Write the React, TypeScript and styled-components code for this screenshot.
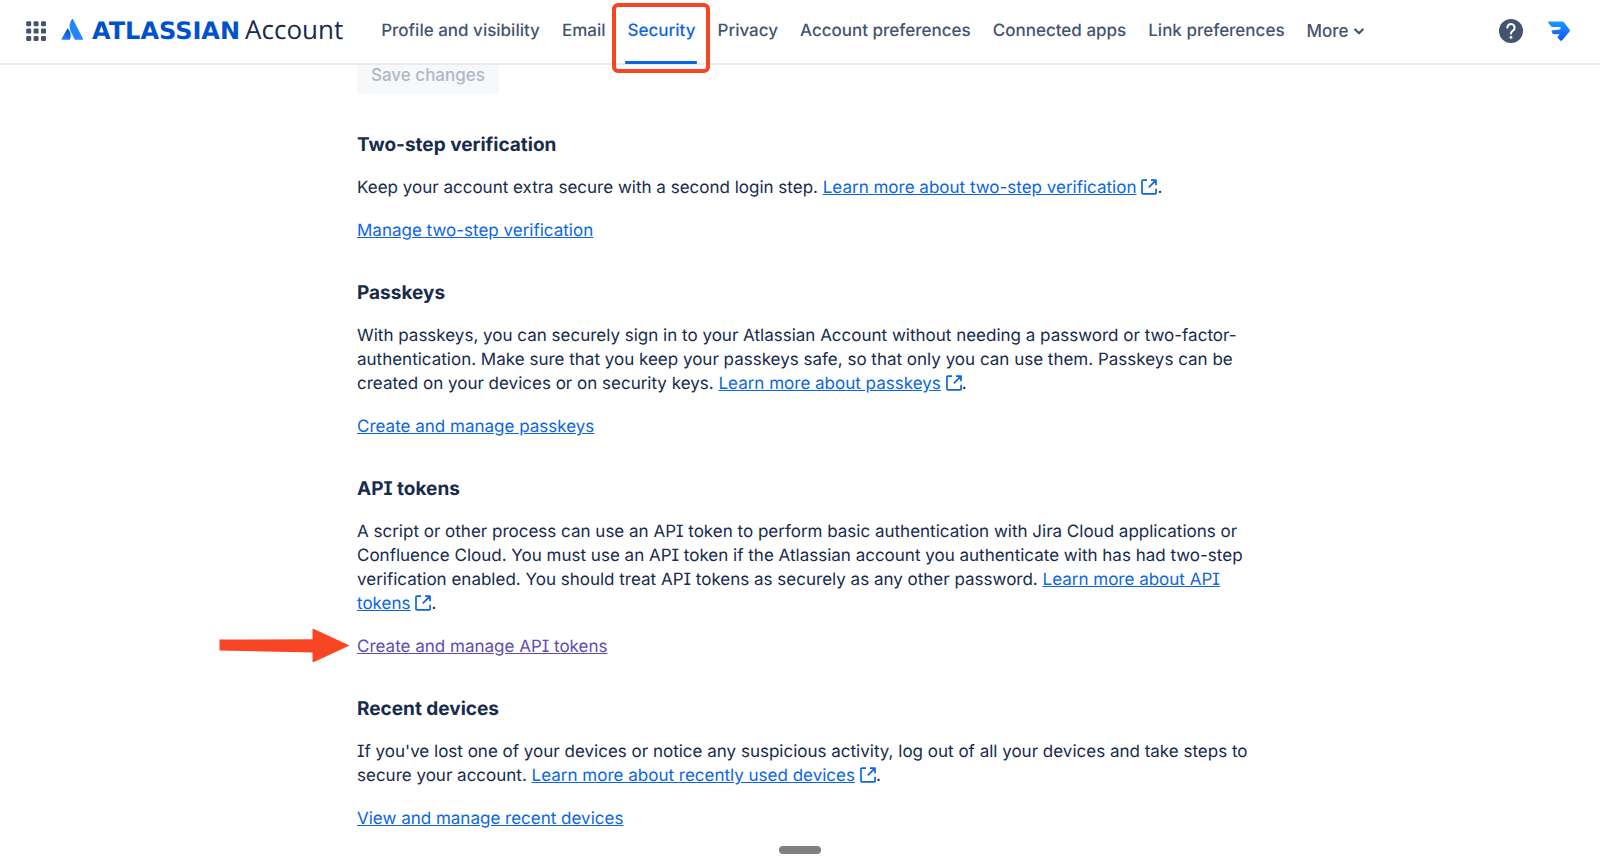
import React from "react";
import styled, { createGlobalStyle, css } from "styled-components";

const GlobalStyle = createGlobalStyle`
  * { box-sizing: border-box; }
  body {
    margin: 0;
    background: #ffffff;
    color: #172b4d;
    font-family: Inter, "Liberation Sans", sans-serif;
    font-size: 17px;
    line-height: 24px;
    font-feature-settings: "cv08";
    text-rendering: geometricPrecision;
  }
`;

const Header = styled.header`
  position: fixed;
  top: 0;
  left: 0;
  right: 0;
  z-index: 2;
  display: flex;
  align-items: center;
  height: 65px;
  padding: 0 24px 2px;
  background: #ffffff;
  border-bottom: 2px solid #e8eaee;
`;

const IconButton = styled.button`
  display: flex;
  padding: 0;
  border: 0;
  background: none;
  cursor: pointer;
`;

const Brand = styled.a`
  display: flex;
  align-items: center;
  gap: 8px;
  margin: 0 38px 0 12px;
  color: #172b4d;
  text-decoration: none;
`;

const BrandText = styled.span`
  display: flex;
  align-items: baseline;
  gap: 5px;
  padding-bottom: 2px;
`;

const Wordmark = styled.span`
  font: 700 24px/32px "DejaVu Sans", sans-serif;
  color: #0052cc;
`;

const ProductName = styled.span`
  font: 400 26px/32px "Open Sans", sans-serif;
`;

const Nav = styled.nav`
  display: flex;
  gap: 22px;
  flex: 1;
`;

const navItem = css`
  display: flex;
  align-items: center;
  gap: 4px;
  padding: 0;
  border: 0;
  background: none;
  font: 500 17px/24px Inter, "Liberation Sans", sans-serif;
  text-decoration: none;
  white-space: nowrap;
`;

const NavLink = styled.a<{ $active?: boolean }>`
  ${navItem}
  position: relative;
  color: ${(p) => (p.$active ? "#0c66e4" : "#44546f")};
  ${(p) =>
    p.$active &&
    css`
      &::after {
        content: "";
        position: absolute;
        left: -2px;
        right: -2px;
        bottom: -21px;
        height: 3px;
        border-radius: 1px;
        background: #0c66e4;
      }
    `}
`;

const NavButton = styled.button`
  ${navItem}
  color: #44546f;
  cursor: pointer;
`;

const Highlight = styled.span`
  position: absolute;
  inset: -16px -15px -30px -15px;
  border: 4px solid #f84624;
  border-radius: 6px;
  pointer-events: none;
  z-index: 1;
`;

const Tools = styled.div`
  display: flex;
  align-items: center;
  gap: 24px;
  padding-right: 5px;
`;

const Main = styled.main`
  display: flex;
  flex-direction: column;
  align-items: flex-start;
  gap: 38px;
  max-width: 914px;
  margin: 0 auto;
  padding: 56px 0 24px 14px;
`;

const SaveButton = styled.button`
  height: 38px;
  margin-bottom: 1px;
  padding: 0 14px;
  border: 0;
  border-radius: 4px;
  background: #f7f8f9;
  color: #b0b7c5;
  font: 500 17px/24px Inter, "Liberation Sans", sans-serif;
`;

const Section = styled.section`
  display: flex;
  flex-direction: column;
  align-items: flex-start;
  gap: 19px;
`;

const Title = styled.h2`
  margin: 0;
  font-size: 19px;
  line-height: 24px;
  font-weight: 700;
`;

const Text = styled.p`
  margin: 0;
`;

const Link = styled.a<{ $visited?: boolean }>`
  color: ${(p) => (p.$visited ? "#5e4db2" : "#0c66e4")};
  text-decoration: underline;
`;

const External = styled.svg`
  margin-left: 5px;
  vertical-align: -2px;
`;

const ActionRow = styled.div`
  position: relative;
`;

const Pointer = styled.svg`
  position: absolute;
  right: 100%;
  top: -8px;
  margin-right: 7px;
`;

const Handle = styled.div`
  position: fixed;
  left: 50%;
  bottom: 9px;
  width: 42px;
  height: 8px;
  margin-left: -21px;
  border-radius: 4px;
  background: #808080;
`;

const GridIcon = () => (
  <svg width="24" height="24" viewBox="0 0 24 24" fill="#44546f">
    {[2.2, 9.6, 17].map((y) =>
      [2.2, 9.6, 17].map((x) => (
        <rect key={`${x}-${y}`} x={x} y={y} width="5" height="5" rx="1.2" />
      ))
    )}
  </svg>
);

const LogoMark = () => (
  <svg width="24" height="24" viewBox="0 0 24 24">
    <defs>
      <linearGradient id="peak" x1="10" y1="12" x2="4" y2="22" gradientUnits="userSpaceOnUse">
        <stop offset="0" stopColor="#0052cc" />
        <stop offset="0.92" stopColor="#2684ff" />
      </linearGradient>
    </defs>
    <path
      d="M8.2 9.9a.65.65 0 0 0-1.1.1L1.6 19.8a.6.6 0 0 0 .6.9h7.2a.65.65 0 0 0 .6-.35c1.5-3.2.8-7.6-1.8-10.45Z"
      fill="url(#peak)"
    />
    <path
      d="M11.9 0c-2.9 4.6-2.9 9.5-.8 13.3l3.5 7.05a.65.65 0 0 0 .6.35h7.2a.6.6 0 0 0 .6-.9L12.9 0a.57.57 0 0 0-1 0Z"
      fill="#2684ff"
    />
  </svg>
);

const ChevronIcon = () => (
  <svg width="12" height="12" viewBox="0 0 12 12" fill="none" stroke="#44546f" strokeWidth="2.2" strokeLinecap="round" strokeLinejoin="round">
    <path d="M2.2 4.5 6 8.2 9.8 4.5" />
  </svg>
);

const HelpIcon = () => (
  <svg width="24" height="24" viewBox="0 0 24 24" fill="none">
    <circle cx="12" cy="12" r="12" fill="#44546f" />
    <path d="M8.4 8.6a3.6 3.6 0 1 1 5.7 2.9c-1.2.8-2.1 1.3-2.1 3.1" stroke="#fff" strokeWidth="2.1" strokeLinecap="round" />
    <circle cx="12" cy="18.4" r="1.4" fill="#fff" />
  </svg>
);

const AvatarIcon = () => (
  <svg width="24" height="24" viewBox="0 0 24 24">
    <defs>
      <linearGradient id="avatar" x1="0" y1="2" x2="0" y2="22" gradientUnits="userSpaceOnUse">
        <stop offset="0" stopColor="#1a9bff" />
        <stop offset="1" stopColor="#1450ff" />
      </linearGradient>
    </defs>
    <path
      d="M1.4 2.4H15.2Q16.2 2.4 16.9 3.2L22.7 10.8Q23.2 11.6 22.6 12.4L15 21.4Q14.2 22.3 13.3 21.4L10.4 18.2 12.6 15.2H7.2Q5.2 15.2 4.6 12.6 4.4 11.4 5.4 11.2L12.6 10.4Q13.8 10 13.8 8.9 13.6 8 12.4 8H5.6Q4.4 8 3.6 6.8L1 3.3Q.6 2.5 1.4 2.4Z"
      fill="url(#avatar)"
    />
  </svg>
);

const ExternalIcon = () => (
  <External width="16" height="16" viewBox="0 0 16 16" fill="none" stroke="#0c66e4" strokeWidth="1.7" strokeLinejoin="round" aria-hidden="true">
    <path d="M6 1.2H1.9a.9.9 0 0 0-.9.9V13.9a.9.9 0 0 0 .9.9H14.2a.9.9 0 0 0 .9-.9V9.8M10 1.2h5v5M14.8 1.4 7.8 8.4" />
  </External>
);

const ArrowPointer = () => (
  <Pointer width="132" height="36" viewBox="0 0 132 36" aria-hidden="true">
    <path
      d="M1.5 12.5 94.5 12.2V3a1 1 0 0 1 1.5-1L131.5 18.6 96 35a1 1 0 0 1-1.5-1V25.4L1.5 23.5Z"
      fill="#f84624"
    />
  </Pointer>
);

interface SectionData {
  title: string;
  text: string;
  learn: string;
  action: string;
  marked?: boolean;
}

const sections: SectionData[] = [
  {
    title: "Two-step verification",
    text: "Keep your account extra secure with a second login step.",
    learn: "Learn more about two-step verification",
    action: "Manage two-step verification",
  },
  {
    title: "Passkeys",
    text: "With passkeys, you can securely sign in to your Atlassian Account without needing a password or two-factor-authentication. Make sure that you keep your passkeys safe, so that only you can use them. Passkeys can be created on your devices or on security keys.",
    learn: "Learn more about passkeys",
    action: "Create and manage passkeys",
  },
  {
    title: "API tokens",
    text: "A script or other process can use an API token to perform basic authentication with Jira Cloud applications or Confluence Cloud. You must use an API token if the Atlassian account you authenticate with has had two-step verification enabled. You should treat API tokens as securely as any other password.",
    learn: "Learn more about API tokens",
    action: "Create and manage API tokens",
    marked: true,
  },
  {
    title: "Recent devices",
    text: "If you've lost one of your devices or notice any suspicious activity, log out of all your devices and take steps to secure your account.",
    learn: "Learn more about recently used devices",
    action: "View and manage recent devices",
  },
];

const tabs = [
  "Profile and visibility",
  "Email",
  "Security",
  "Privacy",
  "Account preferences",
  "Connected apps",
  "Link preferences",
];

export default function App() {
  return (
    <>
      <GlobalStyle />
      <Header>
        <IconButton aria-label="Switch to another app">
          <GridIcon />
        </IconButton>
        <Brand href="#home">
          <LogoMark />
          <BrandText>
            <Wordmark>ATLASSIAN</Wordmark>
            <ProductName>Account</ProductName>
          </BrandText>
        </Brand>
        <Nav aria-label="Account settings">
          {tabs.map((tab) => (
            <NavLink key={tab} href="#tab" $active={tab === "Security"}>
              {tab}
              {tab === "Security" && <Highlight />}
            </NavLink>
          ))}
          <NavButton>
            More
            <ChevronIcon />
          </NavButton>
        </Nav>
        <Tools>
          <IconButton aria-label="Help">
            <HelpIcon />
          </IconButton>
          <IconButton aria-label="Your profile">
            <AvatarIcon />
          </IconButton>
        </Tools>
      </Header>
      <Main>
        <SaveButton disabled>Save changes</SaveButton>
        {sections.map((s) => (
          <Section key={s.title}>
            <Title>{s.title}</Title>
            <Text>
              {s.text}{" "}
              <Link href="#learn">
                {s.learn}
                <ExternalIcon />
              </Link>
              .
            </Text>
            <ActionRow>
              <Link href="#manage" $visited={s.marked}>
                {s.action}
              </Link>
              {s.marked && <ArrowPointer />}
            </ActionRow>
          </Section>
        ))}
      </Main>
      <Handle />
    </>
  );
}
